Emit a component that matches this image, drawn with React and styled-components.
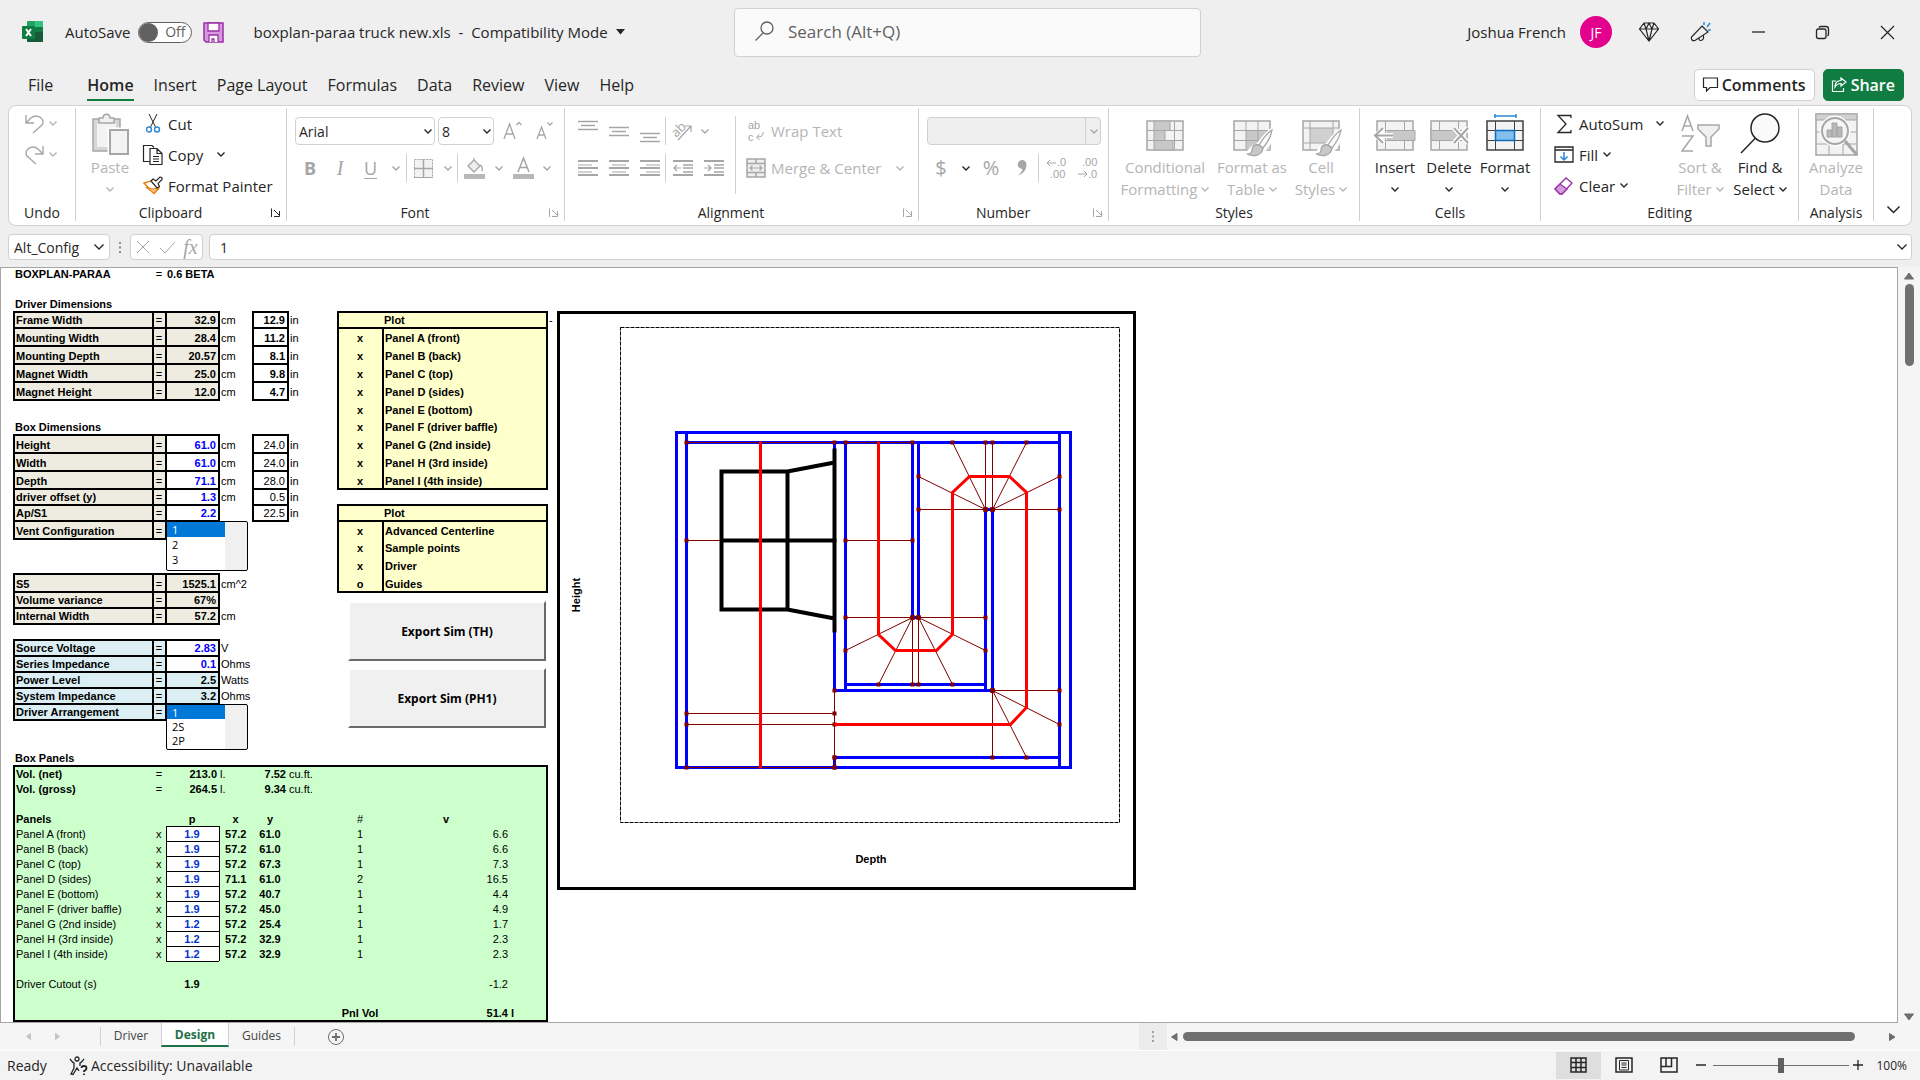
import React from "react";
import styled, { createGlobalStyle, css } from "styled-components";

const ui = `"Open Sans", "Noto Sans", sans-serif`;
const sheetFont = `"Liberation Sans", Arial, sans-serif`;
const ink = "#262626";
const faded = "#b5b5b5";
const line = "#d1d1d1";
const green = "#107c41";

const GlobalStyle = createGlobalStyle`
  * { box-sizing: border-box; }
  body {
    margin: 0;
    font-family: ${ui};
    font-size: 15px;
    color: ${ink};
    background: #efefef;
  }
  button, input, select {
    font: inherit;
    color: inherit;
    margin: 0;
    padding: 0;
    border: 0;
    background: none;
  }
`;

/* ---------- shared ---------- */

const Page = styled.div`
  height: 100vh;
  display: flex;
  flex-direction: column;
  overflow: hidden;
`;

const Svg = styled.svg`
  display: block;
  flex: none;
  overflow: visible;
  fill: none;
  stroke: ${props => props.stroke || "currentColor"};
`;

const Icon = ({ w = 20, h = w, children, ...props }) => (
  <Svg width={w} height={h} viewBox={`0 0 ${w} ${h}`} aria-hidden="true" {...props}>
    {children}
  </Svg>
);

const Chevron = () => (
  <Icon w={8} h={5}>
    <path d="M0.5 0.5 4 4 7.5 0.5" strokeWidth="1.4" />
  </Icon>
);

const Button = styled.button`
  display: flex;
  align-items: center;
  justify-content: center;
  flex: none;
  width: ${props => (props.$w ? `${props.$w}px` : "auto")};
  height: 28px;
  white-space: nowrap;
  color: ${props => (props.$off ? "#a6a6a6" : ink)};
`;

const Rule = styled.span`
  flex: none;
  width: 1px;
  height: ${props => props.$h || 28}px;
  background: ${line};
`;

/* ---------- title bar ---------- */

const TitleBar = styled.header`
  display: flex;
  align-items: center;
  height: 64px;
`;

const TitleSide = styled.div`
  flex: 1 1 0;
  display: flex;
  align-items: center;
  white-space: nowrap;
  justify-content: ${props => (props.$end ? "flex-end" : "flex-start")};
`;

const AppIcon = styled.span`
  margin-left: 22px;
`;

const AutoSave = styled.label`
  display: flex;
  align-items: center;
  gap: 7px;
  margin: 0 11px 0 21px;
`;

const Toggle = styled.span`
  position: relative;
  display: block;
  width: 54px;
  height: 21px;

  input {
    appearance: none;
    display: block;
    width: 54px;
    height: 21px;
    border: 1px solid #616161;
    border-radius: 11px;
    background: #fff;
  }
  input::before {
    content: "";
    display: block;
    width: 19px;
    height: 19px;
    border-radius: 50%;
    background: #616161;
  }
  span {
    position: absolute;
    right: 6px;
    top: 0;
    line-height: 20px;
    font-size: 14px;
    color: #616161;
  }
`;

const FileName = styled(Button)`
  margin-left: 30px;
  gap: 8px;
  white-space: pre;
`;

const Search = styled.label`
  flex: 0 1 467px;
  display: flex;
  align-items: center;
  gap: 14px;
  height: 49px;
  margin-left: 15px;
  padding: 0 20px 2px;
  border: 1px solid ${line};
  border-radius: 4px;
  background: #fafafa;
  color: #616161;

  input {
    flex: 1;
    min-width: 0;
    font-size: 17px;
    outline: none;
  }
  input::placeholder {
    color: #616161;
  }
`;

const Avatar = styled.span`
  display: flex;
  align-items: center;
  justify-content: center;
  width: 32px;
  height: 32px;
  margin: 0 11px 0 14px;
  border-radius: 50%;
  background: #e3008c;
  color: #fff;
  font-size: 14px;
`;

/* ---------- tabs ---------- */

const TabBar = styled.nav`
  display: flex;
  align-items: center;
  height: 41px;
  padding: 0 16px 0 18px;
`;

const Tab = styled.a`
  position: relative;
  margin-right: ${props => (props.$first ? 14 : 0)}px;
  padding: 0 10px;
  font-size: 16px;
  line-height: 32px;
  white-space: nowrap;
  text-decoration: none;
  color: ${ink};
  font-weight: ${props => (props.$active ? 600 : 400)};

  ${props =>
    props.$active &&
    css`
      &::after {
        content: "";
        position: absolute;
        left: 10px;
        right: 10px;
        bottom: 0;
        height: 2px;
        background: ${green};
      }
    `}
`;

const Pill = styled(Button)`
  height: 32px;
  gap: 4px;
  padding: 0 8px;
  margin-left: ${props => (props.$push ? "auto" : "8px")};
  border: 1px solid ${props => (props.$solid ? green : line)};
  border-radius: 5px;
  font-size: 16px;
  font-weight: 600;
  background: ${props => (props.$solid ? green : "#fff")};
  color: ${props => (props.$solid ? "#fff" : ink)};
`;

/* ---------- ribbon ---------- */

const Ribbon = styled.section`
  flex: none;
  display: flex;
  height: 121px;
  margin: 0 8px;
  padding: 2px 0 4px;
  border: 1px solid ${line};
  border-radius: 8px;
  background: #fff;
`;

const GroupBox = styled.div`
  flex: none;
  width: ${props => props.$w}px;
  display: flex;
  flex-direction: column;
  border-right: 1px solid ${line};
`;

const GroupBody = styled.div`
  flex: none;
  display: flex;
  align-items: flex-start;
  height: 96px;
  padding-left: ${props => props.$pad}px;
`;

const GroupLabel = styled.div`
  display: flex;
  align-items: center;
  height: 17px;
  font-size: 14px;
  line-height: 17px;

  span {
    flex: 1;
    text-align: center;
  }
`;

const Launcher = styled(Button)`
  width: 21px;
  height: 17px;
`;

const Stack = styled.div`
  display: flex;
  flex-direction: column;
  width: ${props => (props.$w ? `${props.$w}px` : "auto")};
  gap: ${props => props.$gap || 0}px;
  padding-top: ${props => props.$top || 0}px;
  padding-left: ${props => props.$left || 0}px;
`;

const Row = styled.div`
  display: flex;
  align-items: center;
`;

const SmallButton = styled(Button)`
  height: ${props => props.$h || 31}px;
  justify-content: flex-start;
  gap: 5px;
  color: ${props => (props.$off ? faded : ink)};
`;

const IconSlot = styled.span`
  flex: none;
  display: flex;
  justify-content: center;
  width: 20px;
`;

const Spacer = styled.span`
  flex: ${props => (props.$w ? `0 0 ${props.$w}px` : "1")};
`;

const BigButton = styled.button`
  display: block;
  flex: none;
  width: ${props => props.$w}px;
  color: ${props => (props.$off ? faded : ink)};
`;

const BigIcon = styled.span`
  display: flex;
  align-items: center;
  justify-content: center;
  height: 48px;
  padding-top: 4px;
`;

const BigLine = styled.span`
  display: flex;
  align-items: center;
  justify-content: center;
  gap: 4px;
  height: 22px;
  line-height: 22px;
  white-space: nowrap;
`;

const Combo = styled.span`
  position: relative;
  display: block;
  width: ${props => props.$w}px;
  margin-right: ${props => props.$mr || 0}px;

  select {
    appearance: none;
    width: 100%;
    height: 28px;
    padding: 0 3px;
    border: 1px solid ${line};
    border-radius: 4px;
    background: ${props => (props.$off ? "#efefef" : "#fff")};
    font-size: 14px;
    opacity: 1;
  }
  svg {
    position: absolute;
    right: 3px;
    top: 12px;
    color: ${props => (props.$off ? "#a6a6a6" : ink)};
    pointer-events: none;
  }
  &::after {
    content: "";
    display: ${props => (props.$off ? "block" : "none")};
    position: absolute;
    right: 15px;
    top: 1px;
    bottom: 1px;
    width: 1px;
    background: ${line};
  }
`;

const Glyph = styled.span`
  font-size: ${props => props.$size || 18}px;
  line-height: 20px;
  font-weight: ${props => (props.$bold ? 700 : 400)};
  font-style: ${props => (props.$italic ? "italic" : "normal")};
  font-family: ${props => (props.$serif ? `"Liberation Serif", serif` : ui)};
  text-decoration: ${props => (props.$under ? "underline" : "none")};
  text-underline-offset: 3px;
`;

const Group = ({ label, w, pad = 8, launch, off, children }) => (
  <GroupBox $w={w}>
    <GroupBody $pad={pad}>{children}</GroupBody>
    <GroupLabel>
      <span>{label}</span>
      {launch && (
        <Launcher $off={off} aria-label={`${label} settings`}>
          <Icon w={9} h={9}>
            <path d="M0.5 9V0.5M3 2l5 5M8.5 3v5.500H3" />
          </Icon>
        </Launcher>
      )}
    </GroupLabel>
  </GroupBox>
);

const Big = ({ icon, top, bottom, arrow, ...props }) => (
  <BigButton {...props}>
    <BigIcon>{icon}</BigIcon>
    <BigLine>{top}</BigLine>
    <BigLine>
      {bottom}
      {arrow && <Chevron />}
    </BigLine>
  </BigButton>
);

const Lines = ({ rows, h = 17 }) => (
  <Icon w={20} h={h}>
    {rows.map(([x1, x2, y], i) => (
      <path key={i} d={`M${x1} ${y}H${x2}`} strokeWidth={i % 2 ? 1 : 2} />
    ))}
  </Icon>
);

const VAlign = ({ y }) => (
  <Icon w={20} h={22}>
    <path d={`M0 ${y}h20M3 ${y + 4}h14M0 ${y + 8}h20`} strokeWidth="1.300" />
  </Icon>
);

const GridIcon = ({ children, color = "#a6a6a6", w = 38, h = 36 }) => (
  <Icon w={w} h={h}>
    <rect x="1" y="5" width="36" height="29" fill="#f3f3f3" stroke={color} strokeWidth="1.500" />
    <path d="M9.500 5v29M28.500 5v29M1 14.500h36M1 24.500h36" stroke={color} />
    {children}
  </Icon>
);

const Brush = () => (
  <g stroke="#a6a6a6" strokeWidth="1.300">
    <path d="M39 14c-5 3-10 10-14 15l-6 3-5 7 10 1 7-6c5-6 9-13 8-20z" stroke="#fff" strokeWidth="4" fill="#fff" />
    <path d="M39 14c-5 3-10 10-13 15l4 3c4-5 8-11 9-18z" fill="#fafafa" />
    <path d="M26 29c-4-1-7 1-7 5 0 3-3 4-5 4 6 3 15 2 16-6z" fill="#c8c8c8" />
  </g>
);

const tabs = [
  "File",
  "Home",
  "Insert",
  "Page Layout",
  "Formulas",
  "Data",
  "Review",
  "View",
  "Help"
];

const Title = () => (
  <TitleBar>
    <TitleSide>
      <AppIcon>
        <Icon w={22} h={22} stroke="none">
          <rect x="5" y="0" width="16" height="21" rx="1" fill="#21a366" />
          <path d="M13 0h7a1 1 0 0 1 1 1v5h-8z" fill="#33c481" />
          <path d="M5 11h16v-5h-8v5z" fill="#107c41" />
          <path d="M5 11h16v9a1 1 0 0 1-1 1H6a1 1 0 0 1-1-1z" fill="#185c37" />
          <rect x="0" y="5" width="13" height="13" rx="1" fill="#107c41" />
          <path d="M4 8l5 7M9 8l-5 7" stroke="#fff" strokeWidth="2" />
        </Icon>
      </AppIcon>
      <AutoSave>
        AutoSave
        <Toggle>
          <input type="checkbox" aria-label="AutoSave" />
          <span>Off</span>
        </Toggle>
      </AutoSave>
      <Button aria-label="Save">
        <Icon w={21} h={21} stroke="#9b30a5">
          <path d="M1 1h19v19H3l-2-2z" fill="#d59ade" strokeWidth="1.500" />
          <path d="M5 1h11v8H5zM6 20v-7h9v7M9 20v-3h2v3" fill="#fff" strokeWidth="1.300" />
        </Icon>
      </Button>
      <FileName>
        boxplan-paraa truck new.xls{"  -  "}Compatibility Mode
        <Icon w={9} h={6}>
          <path d="M0 0h9L4.500 5.500z" fill={ink} stroke="none" />
        </Icon>
      </FileName>
    </TitleSide>
    <Search>
      <Icon w={19} h={20}>
        <circle cx="12" cy="7" r="6" strokeWidth="1.300" />
        <path d="M8 12l-7.500 7.500" strokeWidth="1.300" />
      </Icon>
      <input placeholder="Search (Alt+Q)" aria-label="Search" />
    </Search>
    <TitleSide $end>
      Joshua French
      <Avatar>JF</Avatar>
      <Button $w={52} aria-label="Premium">
        <Icon w={20} h={20}>
          <path
            d="M5 1h10l4.500 6L10 19 .500 7zM.500 7h19M5 1l2 6 3 12 3-12 2-6M7 7l3-6 3 6"
            strokeWidth="1.200"
          />
        </Icon>
      </Button>
      <Button $w={52} aria-label="Coming soon">
        <Icon w={20} h={20}>
          <path
            d="M11 4l6 6-13 8.500q-2 .500-3-.500t-.500-3zM8 16c-.500 3 3 3.500 4.500.500v-3"
            strokeWidth="1.200"
          />
          <path d="M13 3V0M16 5l3-4M17 8h3" stroke="#2b88d8" strokeWidth="1.500" />
        </Icon>
      </Button>
      <Button $w={62} aria-label="Minimize">
        <Icon w={13} h={2}>
          <path d="M0 1h13" strokeWidth="1.300" />
        </Icon>
      </Button>
      <Button $w={66} aria-label="Restore">
        <Icon w={13} h={13}>
          <rect x="0.500" y="3" width="9.500" height="9.500" rx="2" strokeWidth="1.300" />
          <path
            d="M3 1.500C3.500.800 4 .500 5 .500h5a2.500 2.500 0 0 1 2.500 2.500v5c0 1-.300 1.500-1 2"
            strokeWidth="1.300"
          />
        </Icon>
      </Button>
      <Button $w={65} aria-label="Close">
        <Icon w={13} h={13}>
          <path d="M0 0l13 13M13 0L0 13" strokeWidth="1.200" />
        </Icon>
      </Button>
    </TitleSide>
  </TitleBar>
);

const Tabs = () => (
  <TabBar>
    {tabs.map(name => (
      <Tab key={name} href="#" $first={name === "File"} $active={name === "Home"}>
        {name}
      </Tab>
    ))}
    <Pill $push>
      <Icon w={15} h={15}>
        <path d="M.500 1h14v9.500H7l-3.500 3.500v-3.500h-3z" strokeWidth="1.200" />
      </Icon>
      Comments
    </Pill>
    <Pill $solid>
      <Icon w={15} h={15}>
        <path
          d="M4 4H.500v10.500h11V11M9 1l5 4-5 4V6.500c-3 0-4.500 1-6 3.500 0-4 2-6.500 6-6.500z"
          strokeWidth="1.200"
        />
      </Icon>
      Share
    </Pill>
  </TabBar>
);

const RibbonBar = () => (
  <Ribbon>
    <Group label="Undo" w={67} pad={15}>
      <Stack>
        {["Undo", "Redo"].map(name => (
          <SmallButton key={name} $off aria-label={name}>
            <IconSlot>
              <Icon w={19} h={20} stroke="#a6a6a6">
                <path
                  d={
                    name === "Undo"
                      ? "M1 1v8h8M1.500 8.500L6 4C12-1 21 5 17 11L8 19"
                      : "M18 1v8h-8M17.500 8.500L13 4C7-1-2 5 2 11l9 8"
                  }
                  strokeWidth="1.400"
                />
              </Icon>
            </IconSlot>
            <Chevron />
          </SmallButton>
        ))}
      </Stack>
    </Group>

    <Group label="Clipboard" w={211} pad={9} launch>
      <Big
        $w={50}
        $off
        top="Paste"
        arrow
        icon={
          <Icon w={37} h={41} stroke="#a6a6a6">
            <path d="M1 5h27v32H1z" fill="#d6d6d6" strokeWidth="1.500" />
            <path d="M5 9h19v24H5z" fill="#f3f3f3" stroke="none" />
            <path d="M7 9V4h4c0-5 7-5 7 0h4v5z" fill="#f0f0f0" strokeWidth="1.500" />
            <path d="M18 16h18v24H18z" fill="#f3f3f3" stroke="#fff" strokeWidth="5" />
            <path d="M18 16h18v24H18z" fill="#f3f3f3" strokeWidth="2" />
          </Icon>
        }
      />
      <Stack $left={8}>
        <SmallButton>
          <IconSlot>
            <Icon w={14} h={19}>
              <path d="M3 0l6.500 13M11 0L4.500 13" />
              <g stroke="#2b88d8" strokeWidth="1.400">
                <circle cx="3" cy="15.500" r="2.500" />
                <circle cx="11" cy="15.500" r="2.500" />
              </g>
            </Icon>
          </IconSlot>
          Cut
        </SmallButton>
        <SmallButton>
          <IconSlot>
            <Icon w={20} h={20}>
              <path d="M7 16.500H.500V.500H9l2 2" strokeWidth="1.200" />
              <path
                d="M7 3.500h7l5 5v11H7zM14 3.500v5h5M10 11.500h6M10 14h6M10 16.500h6"
                strokeWidth="1.200"
              />
            </Icon>
          </IconSlot>
          Copy
          <Spacer $w={4} />
          <Chevron />
        </SmallButton>
        <SmallButton>
          <IconSlot>
            <Icon w={20} h={18}>
              <path d="M1 6l7-2 8 7-5 5.500z" fill="#fff" stroke="#e8801a" strokeWidth="1.400" />
              <path d="M3 10l8 6.500 4-5.500-6 1z" fill="#fbc98a" stroke="#e8801a" strokeWidth="1.200" />
              <path d="M8 4l2-2 3 2 4-4q2.500 0 2 2.500L15 6.500l1.500 3L14 11z" fill="#fff" strokeWidth="1.200" />
            </Icon>
          </IconSlot>
          Format Painter
        </SmallButton>
      </Stack>
    </Group>

    <Group label="Font" w={278} launch off>
      <Stack $top={9} $gap={9}>
        <Row>
          <Combo $w={140} $mr={3}>
            <select aria-label="Font">
              <option>Arial</option>
            </select>
            <Chevron />
          </Combo>
          <Combo $w={56}>
            <select aria-label="Font size">
              <option>8</option>
            </select>
            <Chevron />
          </Combo>
          <Button $w={36} $off aria-label="Increase font size">
            <Icon w={19} h={20}>
              <path d="M1 18L6.500 3 12 18M3 13h7M13.500 4l2.500-2.500L18.500 4" strokeWidth="1.300" />
            </Icon>
          </Button>
          <Button $w={28} $off aria-label="Decrease font size">
            <Icon w={17} h={20}>
              <path d="M1 18L5.500 6 10 18M3 14h5M11.500 1.500L14 4l2.500-2.500" strokeWidth="1.300" />
            </Icon>
          </Button>
        </Row>
        <Row>
          <Button $w={30} $off aria-label="Bold">
            <Glyph $bold>B</Glyph>
          </Button>
          <Button $w={30} $off aria-label="Italic">
            <Glyph $italic $serif $size={20}>
              I
            </Glyph>
          </Button>
          <Button $w={31} $off aria-label="Underline">
            <Glyph $under>U</Glyph>
          </Button>
          <Button $w={20} $off aria-label="Underline styles">
            <Chevron />
          </Button>
          <Rule />
          <Button $w={32} $off aria-label="Borders">
            <Icon w={19} h={19}>
              <path d="M.500.500h18v18H.500z" fill="#f3f3f3" strokeDasharray="2 1" />
              <path d="M9.500 0v19M0 9.500h19" strokeWidth="1.500" />
              <path d="M0 18.500h19" />
            </Icon>
          </Button>
          <Button $w={18} $off aria-label="Border styles">
            <Chevron />
          </Button>
          <Rule />
          <Button $w={32} $off aria-label="Fill color">
            <Icon w={21} h={21}>
              <path d="M4 8l6-6 6 6-6 6zM10 2V0M16 7q3 1 2 6" fill="#eee" strokeWidth="1.300" />
              <path d="M0 18.500h21" strokeWidth="5" stroke="#b8b8b8" />
            </Icon>
          </Button>
          <Button $w={17} $off aria-label="Fill colors">
            <Chevron />
          </Button>
          <Button $w={32} $off aria-label="Font color">
            <Icon w={21} h={21}>
              <path d="M5 14l5.500-14L16 14M7 9.500h7" strokeWidth="1.500" />
              <path d="M0 18.500h21" strokeWidth="5" stroke="#b8b8b8" />
            </Icon>
          </Button>
          <Button $w={16} $off aria-label="Font colors">
            <Chevron />
          </Button>
        </Row>
      </Stack>
    </Group>

    <Group label="Alignment" w={354} pad={7} launch off>
      <Stack $w={163} $top={9} $gap={9}>
        <Row>
          {[1.5, 7.5, 13.5].map((y, i) => (
            <Button key={y} $w={31} $off aria-label={["Top", "Middle", "Bottom"][i]}>
              <VAlign y={y} />
            </Button>
          ))}
          <Rule />
          <Button $w={32} $off aria-label="Orientation">
            <Icon w={20} h={20}>
              <text
                x="0"
                y="13"
                transform="rotate(-45 7 10)"
                fontSize="13"
                fill="#a6a6a6"
                stroke="none"
              >
                ab
              </text>
              <path d="M6 19L19 5M13 5h6v6" strokeWidth="1.200" />
            </Icon>
          </Button>
          <Button $w={14} $off aria-label="Orientation styles">
            <Chevron />
          </Button>
        </Row>
        <Row>
          <Button $w={31} $off aria-label="Align left">
            <Lines rows={[[0, 20, 1], [0, 14, 5], [0, 20, 8], [0, 14, 12], [0, 20, 15]]} />
          </Button>
          <Button $w={31} $off aria-label="Center">
            <Lines rows={[[0, 20, 1], [3, 17, 5], [0, 20, 8], [3, 17, 12], [0, 20, 15]]} />
          </Button>
          <Button $w={31} $off aria-label="Align right">
            <Lines rows={[[0, 20, 1], [6, 20, 5], [0, 20, 8], [6, 20, 12], [0, 20, 15]]} />
          </Button>
          <Rule />
          {["M8 8H1M4 5L1 8l3 3", "M0 8h7M4 5l3 3-3 3"].map((d, i) => (
            <Button key={d} $w={i ? 28 : 34} $off aria-label={i ? "Indent" : "Outdent"}>
              <Icon w={20} h={17}>
                <path d="M0 1h20M0 15h20" strokeWidth="2" />
                <path d="M10 5h10M10 8h10M10 12h10" strokeWidth="1.300" />
                <path d={d} strokeWidth="1.200" />
              </Icon>
            </Button>
          ))}
        </Row>
      </Stack>
      <Stack $top={8}>
        <Rule $h={78} />
      </Stack>
      <Stack $top={9} $gap={9} $left={10}>
        <SmallButton $off $h={28}>
          <IconSlot>
            <Icon w={18} h={20}>
              <g fill="#a6a6a6" stroke="none" fontSize="11" fontFamily={sheetFont}>
                <text x="1" y="8">ab</text>
                <text x="1" y="20">c</text>
              </g>
              <path d="M16 11q1 5-6 5M12.500 13.500L9.500 16l3 3" stroke="#a6a6a6" />
            </Icon>
          </IconSlot>
          Wrap Text
        </SmallButton>
        <SmallButton $off $h={28}>
          <IconSlot>
            <Icon w={20} h={20} stroke="#a6a6a6">
              <path d="M1 1h18v18H1zM1 5.500h18M1 14.500h18M10 1v4.500M10 14.500V19" fill="#eee" strokeWidth="1.500" />
              <path d="M4 10h12M6.500 7.500L4 10l2.500 2.500M13.500 7.500L16 10l-2.500 2.500" strokeWidth="1.200" />
            </Icon>
          </IconSlot>
          Merge &amp; Center
          <Spacer $w={5} />
          <Chevron />
        </SmallButton>
      </Stack>
    </Group>

    <Group label="Number" w={190} launch off>
      <Stack $top={9} $gap={9}>
        <Combo $w={174} $off>
          <select aria-label="Number format" disabled />
          <Chevron />
        </Combo>
        <Row>
          <Button $w={28} $off aria-label="Accounting">
            <Glyph $size={20}>$</Glyph>
          </Button>
          <Button $w={22} aria-label="Accounting formats">
            <Chevron />
          </Button>
          <Button $w={28} $off aria-label="Percent">
            <Glyph $size={20}>%</Glyph>
          </Button>
          <Button $w={33} $off aria-label="Comma">
            <Icon w={10} h={16}>
              <path
                d="M5 0a4.500 4.500 0 0 1 4.500 4.500C9.500 10 6 14 1 15.500c2.500-2 4-4 4.500-6.500A4.500 4.500 0 1 1 5 0z"
                fill="#a6a6a6"
                stroke="none"
              />
            </Icon>
          </Button>
          <Rule />
          {[true, false].map(up => (
            <Button key={String(up)} $w={up ? 34 : 28} $off aria-label={up ? "More decimals" : "Fewer decimals"}>
              <Icon w={19} h={20}>
                <g fill="#a6a6a6" stroke="none" fontSize="11" fontFamily={sheetFont}>
                  <text x={up ? 10 : 4} y="8">{up ? ".0" : ".00"}</text>
                  <text x={up ? 3 : 10} y="20">{up ? ".00" : ".0"}</text>
                </g>
                <path d={up ? "M9 5H0M3 2L0 5l3 3" : "M0 16h9M6 13l3 3-3 3"} />
              </Icon>
            </Button>
          ))}
        </Row>
      </Stack>
    </Group>

    <Group label="Styles" w={251} pad={10}>
      <Big
        $w={92}
        $off
        top="Conditional"
        bottom="Formatting"
        arrow
        icon={
          <GridIcon>
            <path d="M8 5h16v9.500H8zM8 14.500h11v10H8zM8 24.500h19V34H8z" fill="#c8c8c8" stroke="#a6a6a6" />
          </GridIcon>
        }
      />
      <Big
        $w={82}
        $off
        top="Format as"
        bottom="Table"
        arrow
        icon={
          <Icon w={38} h={36} stroke="#a6a6a6">
            <path d="M1 5h36v29H1z" fill="#f3f3f3" strokeWidth="1.500" />
            <path d="M13 14.500h24V34H13z" fill="#c8c8c8" stroke="none" />
            <path d="M13 5v29M25 5v29M1 14.500h36M1 24.500h36" />
            <Brush />
          </Icon>
        }
      />
      <Big
        $w={56}
        $off
        top="Cell"
        bottom="Styles"
        arrow
        icon={
          <Icon w={38} h={36} stroke="#a6a6a6">
            <path d="M1 5h36v29H1z" fill="#f3f3f3" strokeWidth="1.500" />
            <path d="M8 12h23v15H8z" fill="#d0d0d0" stroke="none" />
            <path d="M8 5v29M31 5v29M1 12h36M1 27h36" />
            <Brush />
          </Icon>
        }
      />
    </Group>

    <Group label="Cells" w={181}>
      <Big
        $w={54}
        top="Insert"
        arrow
        icon={
          <GridIcon>
            <path d="M12 14.500h27v10H12z" fill="#c8c8c8" stroke="#a6a6a6" />
            <path d="M17 19.500H0M8 12l-8 7.500L8 27" stroke="#fff" strokeWidth="5" />
            <path d="M17 19.500H-1M7 12l-8 7.500L7 27" stroke="#a6a6a6" strokeWidth="2" />
          </GridIcon>
        }
      />
      <Big
        $w={54}
        top="Delete"
        arrow
        icon={
          <GridIcon>
            <path d="M1 14.500h28v10H1z" fill="#c8c8c8" stroke="#a6a6a6" />
            <path d="M24 12l14 15M38 12L24 27" stroke="#fff" strokeWidth="5" />
            <path d="M24 12l14 15M38 12L24 27" stroke="#a6a6a6" strokeWidth="2" />
          </GridIcon>
        }
      />
      <Big
        $w={58}
        top="Format"
        arrow
        icon={
          <GridIcon color="#404040">
            <path d="M9.500 14.500h19v10h-19z" fill="#83beec" stroke="#0f6cbd" strokeWidth="1.500" />
            <path d="M9 0h21M9-2v4M30-2v4" stroke="#2b88d8" strokeWidth="1.500" />
          </GridIcon>
        }
      />
    </Group>

    <Group label="Editing" w={258} pad={13}>
      <Stack $w={116}>
        <SmallButton>
          <IconSlot>
            <Icon w={15} h={18}>
              <path d="M14 3V.500H1L9 9l-8 8.500h13V15" strokeWidth="1.300" />
            </Icon>
          </IconSlot>
          AutoSum
          <Spacer />
          <Chevron />
          <Spacer $w={1} />
        </SmallButton>
        <SmallButton>
          <IconSlot>
            <Icon w={20} h={17}>
              <path d="M1 1h18v15H1zM1 4h18" strokeWidth="1.300" />
              <path d="M10 6v8M6.500 10.500L10 14l3.500-3.500" stroke="#2b88d8" strokeWidth="1.500" />
            </Icon>
          </IconSlot>
          Fill
          <Chevron />
        </SmallButton>
        <SmallButton>
          <IconSlot>
            <Icon w={20} h={18}>
              <path d="M1 12L12 1l6 5L8 17H6z" fill="#fff" stroke="#9b30a5" strokeWidth="1.300" />
              <path d="M1 12l5-5 7 5-5 5H6z" fill="#d59ade" stroke="#9b30a5" strokeWidth="1.300" />
            </Icon>
          </IconSlot>
          Clear
          <Chevron />
        </SmallButton>
      </Stack>
      <Big
        $w={60}
        $off
        top="Sort &"
        bottom="Filter"
        arrow
        icon={
          <Icon w={39} h={36} stroke="#a6a6a6">
            <path d="M1 15L6.500 0 12 15M3 10h7M1 20h11L1 35h11" strokeWidth="1.500" />
            <path d="M17 9h21v4l-8 8v9h-5v-9l-8-8z" fill="#f0f0f0" strokeWidth="1.500" />
          </Icon>
        }
      />
      <Big
        $w={60}
        top="Find &"
        bottom="Select"
        arrow
        icon={
          <Icon w={40} h={40}>
            <circle cx="25" cy="14" r="14" fill="#fafafa" strokeWidth="1.500" />
            <path d="M15.500 24L1 39" strokeWidth="1.500" />
          </Icon>
        }
      />
    </Group>

    <Group label="Analysis" w={75} pad={2}>
      <Big
        $w={70}
        $off
        top="Analyze"
        bottom="Data"
        icon={
          <Icon w={43} h={43} stroke="#a6a6a6">
            <path d="M1 1h41v41H1z" fill="#f3f3f3" strokeWidth="1.500" />
            <path d="M1 1h41v6H1z" fill="#d0d0d0" />
            <path d="M1 19h41M1 31h41M14 31v11M28 31v11" />
            <circle cx="20" cy="18" r="15" fill="#fff" stroke="#fff" />
            <circle cx="20" cy="18" r="13" fill="#f5f5f5" strokeWidth="2" />
            <path d="M12 17h5v7h-5zM17 10h5v14h-5zM22 14h5v10h-5z" fill="#b8b8b8" />
            <path d="M30 28l12 14" strokeWidth="3" />
          </Icon>
        }
      />
    </Group>
    <Stack $top={87} $left={4}>
      <Button $w={30} aria-label="Collapse ribbon">
        <Icon w={13} h={7}>
          <path d="M.500.500l6 6 6-6" strokeWidth="1.500" />
        </Icon>
      </Button>
    </Stack>
  </Ribbon>
);

/* ---------- formula bar ---------- */

const FormulaRow = styled.div`
  flex: none;
  display: flex;
  align-items: center;
  height: 41px;
  padding: 1px 8px 0;
`;

const Field = styled.div`
  flex: ${props => (props.$w ? `0 0 ${props.$w}px` : "1")};
  min-width: 0;
  display: flex;
  align-items: center;
  height: 26px;
  border: 1px solid ${line};
  border-radius: 4px;
  background: #fff;

  input {
    flex: 1;
    width: 0;
    min-width: 0;
    padding-left: ${props => (props.$wide ? 10 : 5)}px;
    font-size: 14px;
    outline: none;
  }
`;

const Dots = styled.span`
  flex: 0 0 ${props => props.$w}px;
  display: flex;
  justify-content: center;
  color: #8a8a8a;
`;

const DotIcon = () => (
  <Icon w={2} h={11}>
    <path d="M1 0v11" strokeWidth="2" strokeDasharray="2 2.500" />
  </Icon>
);

const FormulaBar = () => (
  <FormulaRow>
    <Field $w={102}>
      <input defaultValue="Alt_Config" aria-label="Name box" />
      <Button $w={20} aria-label="Names">
        <Icon w={10} h={6}>
          <path d="M.500.500L5 5 9.500.500" strokeWidth="1.400" />
        </Icon>
      </Button>
    </Field>
    <Dots $w={20}>
      <DotIcon />
    </Dots>
    <Field $w={73}>
      <Button $w={24} $off aria-label="Cancel">
        <Icon w={12} h={12}>
          <path d="M0 0l12 12M12 0L0 12" />
        </Icon>
      </Button>
      <Button $w={24} $off aria-label="Enter">
        <Icon w={15} h={11}>
          <path d="M0 6l5 5L15 0" />
        </Icon>
      </Button>
      <Button $w={23} $off aria-label="Insert function">
        <Glyph $italic $serif $size={20}>
          fx
        </Glyph>
      </Button>
    </Field>
    <Spacer $w={6} />
    <Field $wide>
      <input defaultValue="1" aria-label="Formula" />
      <Button $w={18} aria-label="Expand formula bar">
        <Icon w={10} h={6}>
          <path d="M.500.500L5 5 9.500.500" strokeWidth="1.300" />
        </Icon>
      </Button>
    </Field>
  </FormulaRow>
);

/* ---------- sheet ---------- */

const Workspace = styled.main`
  flex: 1;
  min-height: 0;
  display: flex;
  background: #f5f5f5;
`;

const Canvas = styled.div`
  flex: 1;
  min-width: 0;
  display: flex;
  align-items: flex-start;
  overflow: hidden;
  border: 1px solid #a6a6a6;
  background: #fff;
`;

const Grid = styled.table`
  flex: none;
  table-layout: fixed;
  border-collapse: collapse;
  width: 556px;
  font-family: ${sheetFont};
  font-size: 11px;
  line-height: 13px;
  color: #000;
`;

const Line = styled.tr`
  height: ${props => props.$h}px;
`;

const edge = (b, side) => (b && b.includes(side) ? "2px solid #000" : "0 none");

const Cell = styled.td`
  position: relative;
  padding: 0 2px ${props => (props.$lift ? 1 : 0)}px 1px;
  white-space: nowrap;
  vertical-align: bottom;
  text-align: ${props => props.$align || "left"};
  font-weight: ${props => (props.$bold ? 700 : 400)};
  color: ${props => props.$color || "#000"};
  background: ${props => props.$bg || "none"};
  border-top: ${props => edge(props.$b, "t")};
  border-right: ${props => edge(props.$b, "r")};
  border-bottom: ${props => edge(props.$b, "b")};
  border-left: ${props => edge(props.$b, "l")};
  ${props => props.$thin && "border: 1px solid #000;"}
`;

const ListBox = styled.select`
  position: absolute;
  z-index: 1;
  top: -1px;
  left: -1px;
  width: 82px;
  height: ${props => props.$h}px;
  padding-right: 22px;
  overflow: hidden;
  border: 1px solid #000;
  background: linear-gradient(#f0f0f0, #f0f0f0) right / 22px 100% no-repeat #fff;
  font-family: ${ui};
  font-size: 11px;
  outline: none;

  option {
    min-height: 0;
    height: ${props => props.$row}px;
    padding: 0 5px;
    line-height: ${props => props.$row}px;
    background: #fff;
  }
  option:checked {
    background: #0078d7 linear-gradient(#0078d7, #0078d7);
    -webkit-text-fill-color: #fff;
  }
`;

const MacroButtons = styled.div`
  position: absolute;
  z-index: 1;
  top: 8px;
  left: 10px;
  display: grid;
  gap: 7px;
`;

const MacroButton = styled.button`
  width: 198px;
  height: 60px;
  border: 2px solid;
  border-color: #fff #696969 #696969 #fff;
  background: #f0f0f0;
  font-family: "Noto Sans", sans-serif;
  font-size: 12px;
  font-weight: 700;
  color: #000;
`;

const tan = "#eeece1";
const sky = "#daeef3";
const cream = "#ffffcc";
const mint = "#ccffcc";
const blue = "#0000ff";

const columns = [13, 139, 13, 53, 34, 35, 50, 45, 127, 37, 10];

const topRows = [
  { h: 13, title: "BOXPLAN-PARAA", note: "0.6 BETA" },
  { h: 15 },
  { h: 16, title: "Driver Dimensions" },
  { h: 16, label: "Frame Width", value: "32.9", unit: "cm", inch: "12.9", strong: true, head: true, dash: true },
  { h: 18, label: "Mounting Width", value: "28.4", unit: "cm", inch: "11.2", strong: true, mark: "x", plot: "Panel A (front)" },
  { h: 18, label: "Mounting Depth", value: "20.57", unit: "cm", inch: "8.1", strong: true, mark: "x", plot: "Panel B (back)" },
  { h: 18, label: "Magnet Width", value: "25.0", unit: "cm", inch: "9.8", strong: true, mark: "x", plot: "Panel C (top)" },
  { h: 18, label: "Magnet Height", value: "12.0", unit: "cm", inch: "4.7", strong: true, mark: "x", plot: "Panel D (sides)" },
  { h: 18, mark: "x", plot: "Panel E (bottom)" },
  { h: 17, title: "Box Dimensions", mark: "x", plot: "Panel F (driver baffle)" },
  { h: 18, label: "Height", value: "61.0", unit: "cm", inch: "24.0", input: true, mark: "x", plot: "Panel G (2nd inside)" },
  { h: 18, label: "Width", value: "61.0", unit: "cm", inch: "24.0", input: true, mark: "x", plot: "Panel H (3rd inside)" },
  { h: 18, label: "Depth", value: "71.1", unit: "cm", inch: "28.0", input: true, mark: "x", plot: "Panel I (4th inside)", last: true },
  { h: 16, label: "driver offset (y)", value: "1.3", unit: "cm", inch: "0.5", input: true },
  { h: 16, label: "Ap/S1", value: "2.2", inch: "22.5", input: true, head: true },
  { h: 18, label: "Vent Configuration", list: ["1", "2", "3"], row: 15, listH: 50, mark: "x", plot: "Advanced Centerline" },
  { h: 17, mark: "x", plot: "Sample points" },
  { h: 18, mark: "x", plot: "Driver" },
  { h: 18, label: "S5", value: "1525.1", unit: "cm^2", mark: "o", plot: "Guides", last: true },
  { h: 16, label: "Volume variance", value: "67%", macros: true },
  { h: 16, label: "Internal Width", value: "57.2", unit: "cm" },
  { h: 16 },
  { h: 16, label: "Source Voltage", value: "2.83", unit: "V", bg: sky, input: true },
  { h: 16, label: "Series Impedance", value: "0.1", unit: "Ohms", bg: sky, input: true },
  { h: 16, label: "Power Level", value: "2.5", unit: "Watts", bg: sky },
  { h: 16, label: "System Impedance", value: "3.2", unit: "Ohms", bg: sky },
  { h: 16, label: "Driver Arrangement", list: ["1", "2S", "2P"], row: 14, listH: 46, bg: sky },
  { h: 15 },
  { h: 16 },
  { h: 15, title: "Box Panels" }
];

const panels = [
  ["Panel A (front)", "1.9", "57.2", "61.0", "1", "6.6"],
  ["Panel B (back)", "1.9", "57.2", "61.0", "1", "6.6"],
  ["Panel C (top)", "1.9", "57.2", "67.3", "1", "7.3"],
  ["Panel D (sides)", "1.9", "71.1", "61.0", "2", "16.5"],
  ["Panel E (bottom)", "1.9", "57.2", "40.7", "1", "4.4"],
  ["Panel F (driver baffle)", "1.9", "57.2", "45.0", "1", "4.9"],
  ["Panel G (2nd inside)", "1.2", "57.2", "25.4", "1", "1.7"],
  ["Panel H (3rd inside)", "1.2", "57.2", "32.9", "1", "2.3"],
  ["Panel I (4th inside)", "1.2", "57.2", "32.9", "1", "2.3"]
];

const PlotCells = ({ row }) => {
  if (row.head)
    return (
      <>
        <Cell $bg={cream} $b="tbl" />
        <Cell $bg={cream} $b="tbr" $bold colSpan={2}>
          Plot
        </Cell>
      </>
    );
  if (row.plot)
    return (
      <>
        <Cell $bg={cream} $bold $align="center" $lift={!row.last} $b={row.last ? "lrb" : "lr"}>
          {row.mark}
        </Cell>
        <Cell $bg={cream} $bold $lift={!row.last} $b={row.last ? "lrb" : "lr"} colSpan={2}>
          {row.plot}
        </Cell>
      </>
    );
  return (
    <>
      <Cell>
        {row.macros && (
          <MacroButtons>
            <MacroButton>Export Sim (TH)</MacroButton>
            <MacroButton>Export Sim (PH1)</MacroButton>
          </MacroButtons>
        )}
      </Cell>
      <Cell colSpan={2} />
    </>
  );
};

const TopRow = ({ row }) => {
  const bg = row.bg || tan;
  return (
    <Line $h={row.h}>
      <Cell />
      {row.label ? (
        <>
          <Cell $bold $bg={bg} $b="trbl">
            {row.label}
          </Cell>
          <Cell $bg={bg} $b="trbl" $align="center">
            =
          </Cell>
          {row.list ? (
            <Cell $b="t">
              <ListBox size={3} $h={row.listH} $row={row.row} defaultValue="1" aria-label={row.label}>
                {row.list.map(item => (
                  <option key={item}>{item}</option>
                ))}
              </ListBox>
            </Cell>
          ) : (
            <Cell
              $bold
              $align="right"
              $b="trbl"
              $bg={row.input ? "#fff" : bg}
              $color={row.input ? blue : "#000"}
            >
              {row.value}
            </Cell>
          )}
        </>
      ) : (
        <>
          <Cell $bold>{row.title}</Cell>
          <Cell $align="center">{row.note && "="}</Cell>
          <Cell $bold>{row.note}</Cell>
        </>
      )}
      <Cell $lift>{row.unit}</Cell>
      {row.inch ? (
        <Cell $b="trbl" $align="right" $bold={row.strong}>
          {row.inch}
        </Cell>
      ) : (
        <Cell />
      )}
      <Cell $lift>{row.inch && "in"}</Cell>
      <PlotCells row={row} />
      <Cell $lift>{row.dash && "-"}</Cell>
    </Line>
  );
};

/* one line of the green block, cells given left to right */
const MintRow = ({ cells, top, bottom }) => (
  <Line $h={15}>
    <Cell />
    {columns.slice(1, 10).map((w, i) => {
      const cell = cells[i] || {};
      let b = "";
      if (i === 0) b += "l";
      if (i === 8) b += "r";
      if (top) b += "t";
      if (bottom) b += "b";
      return (
        <Cell
          key={i}
          $b={b}
          $bg={cell.thin ? "#fff" : mint}
          $bold={cell.bold}
          $align={cell.align}
          $color={cell.color}
          $thin={cell.thin}
        >
          {cell.text}
        </Cell>
      );
    })}
    <Cell />
  </Line>
);

const c = (text, bold, align = "center") => ({ text, bold, align });

const volume = (label, litres, feet) => [
  c(label, true, "left"),
  c("="),
  c(litres, true, "right"),
  c("l.", false, "left"),
  c(feet, true, "right"),
  c("cu.ft.", false, "left")
];

const Sheet = () => (
  <Grid>
    <colgroup>
      {columns.map((w, i) => (
        <col key={i} width={w} />
      ))}
    </colgroup>
    <tbody>
      {topRows.map((row, i) => (
        <TopRow key={i} row={row} />
      ))}
      <MintRow top cells={volume("Vol. (net)", "213.0", "7.52")} />
      <MintRow cells={volume("Vol. (gross)", "264.5", "9.34")} />
      <MintRow cells={[]} />
      <MintRow
        cells={[
          c("Panels", true, "left"),
          null,
          c("p", true),
          c("x", true),
          c("y", true),
          null,
          c("#"),
          c("v", true)
        ]}
      />
      {panels.map(([name, p, x, y, count, v]) => (
        <MintRow
          key={name}
          cells={[
            c(name, false, "left"),
            c("x"),
            { text: p, bold: true, align: "center", color: "#0033cc", thin: true },
            c(x, true),
            c(y, true),
            null,
            c(count),
            c(v, false, "right")
          ]}
        />
      ))}
      <MintRow cells={[]} />
      <MintRow
        cells={[
          c("Driver Cutout (s)", false, "left"),
          null,
          c("1.9", true),
          null,
          null,
          null,
          null,
          c("-1.2", false, "right")
        ]}
      />
      <MintRow cells={[]} />
      <MintRow
        bottom
        cells={[
          null,
          null,
          null,
          null,
          null,
          null,
          c("Pnl Vol", true),
          c("51.4", true, "right"),
          c("l", true, "left")
        ]}
      />
    </tbody>
  </Grid>
);

/* ---------- chart ---------- */

const ChartBox = styled.figure`
  flex: none;
  margin: 43px 0 0;
  font-family: ${sheetFont};
`;

const rays = [
  [[686, 442], [834, 442]],
  [[845, 442], [912, 442]],
  [[686, 540], [834, 540]],
  [[845, 540], [912, 540]],
  [[985, 509], [918, 509]],
  [[985, 509], [918, 476]],
  [[985, 509], [952, 442]],
  [[985, 509], [985, 442]],
  [[992, 509], [992, 442]],
  [[992, 509], [1026, 442]],
  [[992, 509], [1059, 476]],
  [[992, 509], [1059, 509]],
  [[912, 617], [845, 617]],
  [[912, 617], [845, 650]],
  [[912, 617], [878, 684]],
  [[912, 617], [912, 684]],
  [[918, 617], [918, 684]],
  [[918, 617], [952, 684]],
  [[918, 617], [985, 650]],
  [[918, 617], [985, 617]],
  [[992, 690], [992, 757]],
  [[992, 690], [1026, 757]],
  [[992, 690], [1059, 724]],
  [[992, 690], [1059, 690]],
  [[686, 713], [834, 713]],
  [[686, 724], [834, 724]],
  [[686, 767], [834, 767]],
  [[834, 690], [834, 757]],
  [[834, 757], [834, 767]]
];

const Chart = () => (
  <ChartBox>
    <Svg width="579" height="579" viewBox="557 311 579 579" role="img" aria-label="Box plan">
      <rect x="558.500" y="312.500" width="576" height="576" stroke="#000" strokeWidth="3" fill="#fff" />
      <rect
        x="620.500"
        y="327.500"
        width="499"
        height="495"
        stroke="#000"
        strokeDasharray="4 1"
      />
      <g transform="translate(.5 .5)">
        <path
          d="M676 432H1070V767H676ZM686 432V767M1059 432V767M686 442H1059M834 757H1059M834 757V767M834 442V690H992V509H985V690M845 442V690M845 684H985M912 442V617H918V442"
          stroke="#0000ff"
          strokeWidth="3"
        />
        <g stroke="#800000" fill="#800000">
          {rays.map(([from, to], i) => (
            <path key={i} d={`M${from.join(" ")}L${to.join(" ")}`} />
          ))}
          {rays.map(([from, to], i) => (
            <g key={i} stroke="none">
              <rect x={from[0] - 2} y={from[1] - 2} width="4" height="4" />
              <rect x={to[0] - 2} y={to[1] - 2} width="4" height="4" />
            </g>
          ))}
        </g>
        <path
          d="M834 448V632M834 462L787 471H721V609H787L834 618M787 471V609M721 540H834"
          stroke="#000"
          strokeWidth="4"
        />
        <path
          d="M760 441V768M878 441V634L895 650H936L952 634V492L969 476H1009L1026 492V707L1010 724H834"
          stroke="#ff0000"
          strokeWidth="3"
        />
      </g>
      <g fill="#000" stroke="none" fontSize="11" fontWeight="700" textAnchor="middle">
        <text x="871" y="863">Depth</text>
        <text transform="rotate(-90 580 595)" x="580" y="595">Height</text>
      </g>
    </Svg>
  </ChartBox>
);

/* ---------- scrollbars, sheet tabs, status ---------- */

const ScrollColumn = styled.div`
  flex: 0 0 22px;
  display: flex;
  flex-direction: column;
  align-items: center;
  padding: 5px 0 2px;
  color: #6e6e6e;
`;

const VThumb = styled.div`
  width: 9px;
  height: 82px;
  margin: 4px 0 auto;
  border-radius: 5px;
  background: #707070;
`;

const Arrow = ({ d, w = 10, h = 8 }) => (
  <Icon w={w} h={h}>
    <path d={d} fill="currentColor" strokeLinejoin="round" />
  </Icon>
);

const SheetTabs = styled.div`
  flex: none;
  display: flex;
  align-items: center;
  height: 28px;
  background: #f5f5f5;
  border-bottom: 1px solid #fff;
  font-size: 12px;
`;

const SheetArrows = styled.div`
  display: flex;
  align-items: center;
  gap: 24px;
  width: 100px;
  padding-left: 26px;
  color: #c4c4c4;
`;

const SheetTab = styled.button`
  align-self: flex-start;
  height: 24px;
  width: ${props => props.$w}px;
  color: ${props => (props.$active ? "#1e7145" : "#444")};
  font-weight: ${props => (props.$active ? 700 : 400)};
  ${props =>
    props.$active &&
    css`
      background: #fff;
      border: 1px solid ${line};
      border-top: 0;
      border-bottom: 2px solid #1e7145;
    `}
`;

const Splitter = styled.div`
  display: flex;
  align-items: center;
  justify-content: center;
  width: 28px;
  height: 27px;
  margin-left: auto;
  background: #ececec;
  color: #a0a0a0;
`;

const HScroll = styled.div`
  flex: 0 1 753px;
  display: flex;
  align-items: center;
  gap: 5px;
  padding: 0 24px 0 4px;
  color: #6e6e6e;
`;

const HThumb = styled.div`
  flex: 1;
  height: 9px;
  margin-right: 29px;
  border-radius: 5px;
  background: #707070;
`;

const StatusBar = styled.footer`
  flex: none;
  display: flex;
  align-items: center;
  height: 29px;
  padding: 0 13px 1px 7px;
  background: #f3f3f3;
  font-size: 14px;
`;

const Access = styled(Button)`
  gap: 3px;
  margin: 0 auto 0 22px;
`;

const ViewButton = styled(Button)`
  width: 45px;
  height: 27px;
  background: ${props => (props.$active ? "#dedede" : "none")};
`;

const ZoomSlider = styled.input`
  appearance: none;
  width: 136px;
  height: 15px;
  margin: 0 2px;
  background: linear-gradient(#6e6e6e, #6e6e6e) center / 100% 1px no-repeat;

  &::-webkit-slider-thumb {
    appearance: none;
    width: 6px;
    height: 15px;
    background: #606060;
  }
`;

const ZoomText = styled.span`
  margin-left: 11px;
  font-size: 12px;
`;

const Bottom = () => (
  <>
    <SheetTabs>
      <SheetArrows>
        <Arrow w={5} h={7} d="M4.500.500v6L.500 3.500z" />
        <Arrow w={5} h={7} d="M.500.500v6l4-3z" />
      </SheetArrows>
      <Rule $h={19} />
      <SheetTab $w={60}>Driver</SheetTab>
      <SheetTab $w={68} $active>
        Design
      </SheetTab>
      <SheetTab $w={65}>Guides</SheetTab>
      <Rule $h={19} />
      <Button $w={82} aria-label="New sheet">
        <Icon w={16} h={16} stroke="#6e6e6e">
          <circle cx="8" cy="8" r="7.500" />
          <path d="M4 8h8M8 4v8" strokeWidth="1.800" />
        </Icon>
      </Button>
      <Splitter>
        <DotIcon />
      </Splitter>
      <HScroll>
        <Arrow w={7} h={8} d="M6 .500v7L.500 4z" />
        <HThumb />
        <Arrow w={7} h={8} d="M.500.500v7L6 4z" />
      </HScroll>
    </SheetTabs>
    <StatusBar>
      Ready
      <Access>
        <Icon w={19} h={19} strokeWidth="1.300">
          <circle cx="8" cy="3" r="2" />
          <path d="M1 3q3 4 4 4v5L2 18l2 .500L8 12l2 3M15 3q-3 4-4 4v3" />
          <path d="M12.500 12q0-2 2.500-2t2.500 2-2.500 3v1M15 17.500V19" strokeWidth="1.800" />
        </Icon>
        Accessibility: Unavailable
      </Access>
      <ViewButton $active aria-label="Normal">
        <Icon w={17} h={16}>
          <path d="M1 1h15v14H1zM6 1v14M11 1v14M1 5.500h15M1 10.500h15" strokeWidth="1.500" />
        </Icon>
      </ViewButton>
      <ViewButton aria-label="Page layout">
        <Icon w={18} h={16}>
          <path d="M1 1h16v14H1z" strokeWidth="1.500" />
          <path d="M4.500 3.500h9v9.500h-9zM6.500 6h5M6.500 8h5M6.500 10.500h5" />
        </Icon>
      </ViewButton>
      <ViewButton aria-label="Page break preview">
        <Icon w={18} h={16}>
          <path d="M1 1h16v14H1zM6 1v8.500M11.500 1v8.500H1" strokeWidth="1.500" />
        </Icon>
      </ViewButton>
      <Button $w={20} aria-label="Zoom out">
        <Icon w={10} h={2}>
          <path d="M0 1h10" strokeWidth="1.500" />
        </Icon>
      </Button>
      <ZoomSlider type="range" min="10" max="190" defaultValue="100" aria-label="Zoom" />
      <Button $w={14} aria-label="Zoom in">
        <Icon w={10} h={10}>
          <path d="M0 5h10M5 0v10" strokeWidth="1.300" />
        </Icon>
      </Button>
      <ZoomText>100%</ZoomText>
    </StatusBar>
  </>
);

const App = () => (
  <Page>
    <GlobalStyle />
    <Title />
    <Tabs />
    <RibbonBar />
    <FormulaBar />
    <Workspace>
      <Canvas>
        <Sheet />
        <Chart />
      </Canvas>
      <ScrollColumn>
        <Arrow d="M.500 7h9L5 1z" />
        <VThumb />
        <Arrow d="M.500 1h9L5 7z" />
      </ScrollColumn>
    </Workspace>
    <Bottom />
  </Page>
);

export default App;
